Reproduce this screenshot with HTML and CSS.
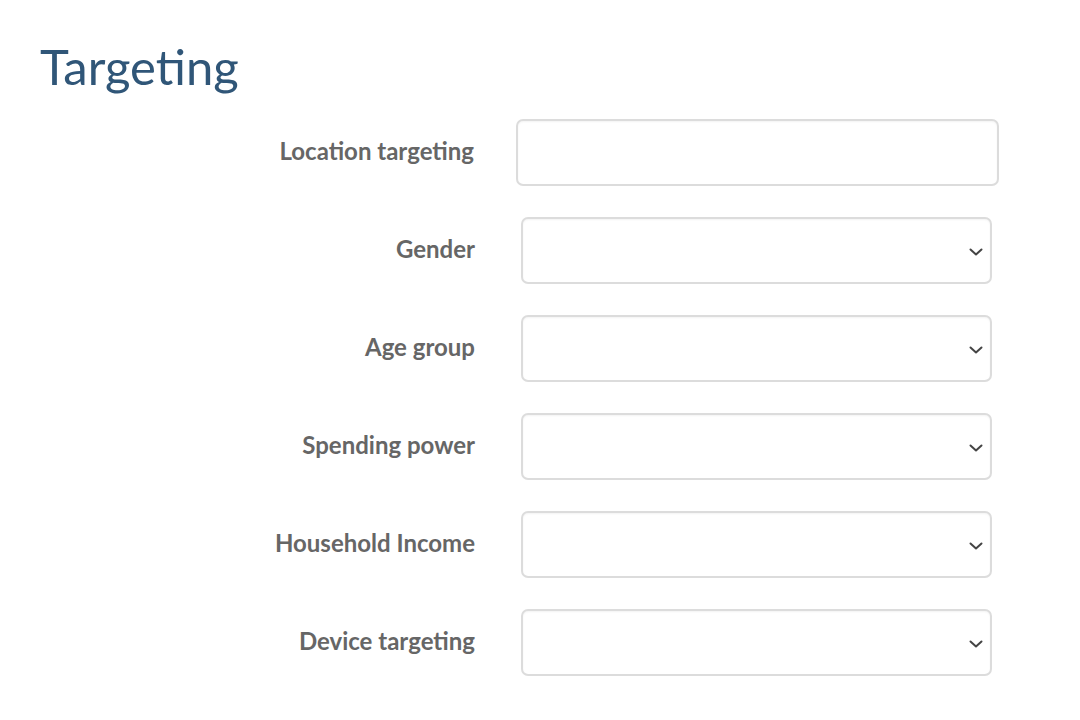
FILE: index.html
```html
<!DOCTYPE html>
<html lang="en">
<head>
<meta charset="utf-8">
<title>Targeting</title>
<link rel="stylesheet" href="styles.css">
</head>
<body>
<main class="page">
  <h1 class="title">Targeting</h1>
  <form class="form">
    <div class="row row--text">
      <label class="label" for="loc">Location targeting</label>
      <input class="text-input" id="loc" type="text">
    </div>
    <div class="row">
      <label class="label" for="gender">Gender</label>
      <div class="select-wrap">
        <select class="select" id="gender"><option></option></select>
        <svg class="chevron" width="14" height="8" viewBox="0 0 14 8" aria-hidden="true"><path d="M1.5 1.5 L7 6.5 L12.5 1.5" fill="none" stroke="#444" stroke-width="2" stroke-linecap="round" stroke-linejoin="round"/></svg>
      </div>
    </div>
    <div class="row">
      <label class="label" for="age">Age group</label>
      <div class="select-wrap">
        <select class="select" id="age"><option></option></select>
        <svg class="chevron" width="14" height="8" viewBox="0 0 14 8" aria-hidden="true"><path d="M1.5 1.5 L7 6.5 L12.5 1.5" fill="none" stroke="#444" stroke-width="2" stroke-linecap="round" stroke-linejoin="round"/></svg>
      </div>
    </div>
    <div class="row">
      <label class="label" for="spend">Spending power</label>
      <div class="select-wrap">
        <select class="select" id="spend"><option></option></select>
        <svg class="chevron" width="14" height="8" viewBox="0 0 14 8" aria-hidden="true"><path d="M1.5 1.5 L7 6.5 L12.5 1.5" fill="none" stroke="#444" stroke-width="2" stroke-linecap="round" stroke-linejoin="round"/></svg>
      </div>
    </div>
    <div class="row">
      <label class="label" for="income">Household Income</label>
      <div class="select-wrap">
        <select class="select" id="income"><option></option></select>
        <svg class="chevron" width="14" height="8" viewBox="0 0 14 8" aria-hidden="true"><path d="M1.5 1.5 L7 6.5 L12.5 1.5" fill="none" stroke="#444" stroke-width="2" stroke-linecap="round" stroke-linejoin="round"/></svg>
      </div>
    </div>
    <div class="row">
      <label class="label" for="device">Device targeting</label>
      <div class="select-wrap">
        <select class="select" id="device"><option></option></select>
        <svg class="chevron" width="14" height="8" viewBox="0 0 14 8" aria-hidden="true"><path d="M1.5 1.5 L7 6.5 L12.5 1.5" fill="none" stroke="#444" stroke-width="2" stroke-linecap="round" stroke-linejoin="round"/></svg>
      </div>
    </div>
  </form>
</main>
</body>
</html>
```
FILE: styles.css
```css
html, body {
  margin: 0;
  padding: 0;
  background: #ffffff;
}

body {
  font-family: Lato, "Open Sans", "Liberation Sans", sans-serif;
}

.page {
  padding: 37px 0 0 40px;
}

.title {
  margin: 0;
  font-size: 49px;
  line-height: 58px;
  font-weight: 400;
  color: #305678;
}

.form {
  display: flex;
  flex-direction: column;
  gap: 31px;
  margin-top: 24px;
}

.row {
  display: flex;
  align-items: center;
}

.label {
  width: 435px;
  flex: none;
  text-align: right;
  font-size: 24px;
  font-weight: 700;
  color: #666666;
  line-height: 28px;
  margin-top: -3px;
}

.row--text .label {
  width: 434px;
}

.text-input,
.select {
  box-sizing: border-box;
  height: 67px;
  border: 2px solid #dcdcdc;
  border-radius: 7px;
  background: #ffffff;
  box-shadow: inset 0 1px 2px rgba(0, 0, 0, 0.05);
  font-family: inherit;
  font-size: 18px;
  color: #333;
  outline: none;
}

.text-input {
  width: 483px;
  margin-left: 42px;
  padding: 0 14px;
}

.select-wrap {
  position: relative;
  margin-left: 46px;
  width: 471px;
}

.select {
  display: block;
  width: 100%;
  appearance: none;
  -webkit-appearance: none;
  padding: 0 40px 0 14px;
}

.chevron {
  position: absolute;
  right: 9px;
  top: 50%;
  margin-top: -3px;
  pointer-events: none;
}
```
